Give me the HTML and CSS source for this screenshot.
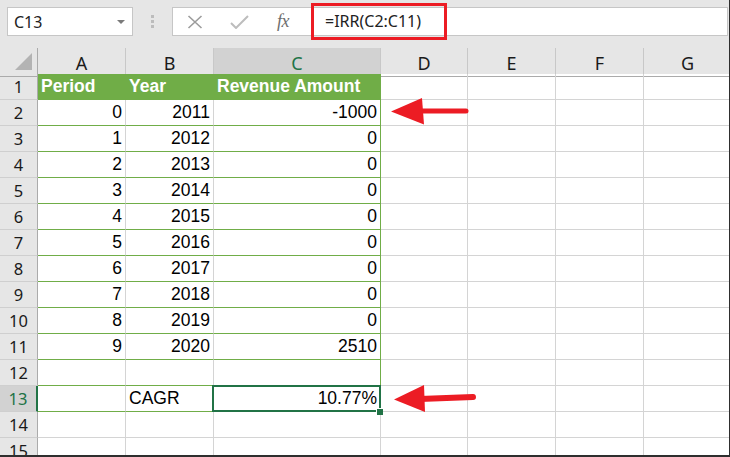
FILE: index.html
```html
<!DOCTYPE html>
<html>
<head>
<meta charset="utf-8">
<link rel="stylesheet" href="styles.css">
</head>
<body>
<div class="page">
  <div class="toolbar">
    <div class="namebox"><span class="name">C13</span><span class="dd"></span></div>
    <div class="grip"><i></i><i></i><i></i></div>
    <div class="fbar">
      <div class="fbtn">
        <svg width="16" height="14" viewBox="0 0 16 14"><path d="M1.5 1 L14.5 13 M14.5 1 L1.5 13" stroke="#9c9c9c" stroke-width="1.6" fill="none"/></svg>
      </div>
      <div class="fbtn">
        <svg width="19" height="14" viewBox="0 0 19 14"><path d="M1 8 L6 13 L18 1" stroke="#bdbdbd" stroke-width="2" fill="none"/></svg>
      </div>
      <div class="fbtn fx">fx</div>
      <div class="formula">=IRR(C2:C11)</div>
    </div>
  </div>

  <div class="sheet">
    <div class="row hdr">
      <div class="corner"><svg width="38" height="26" viewBox="0 0 38 26"><polygon points="16,23 33,6 33,23" fill="#b3b3b3"/></svg></div>
      <div class="ch">A</div><div class="ch">B</div><div class="ch sel">C</div><div class="ch">D</div><div class="ch">E</div><div class="ch">F</div><div class="ch">G</div>
    </div>

    <div class="row">
      <div class="rh">1</div>
      <div class="cell th">Period</div><div class="cell th">Year</div><div class="cell th">Revenue Amount</div>
      <div class="cell"></div><div class="cell"></div><div class="cell"></div><div class="cell"></div>
    </div>
    <div class="row">
      <div class="rh">2</div>
      <div class="cell num t">0</div><div class="cell num t">2011</div><div class="cell num t tr">-1000</div>
      <div class="cell"></div><div class="cell"></div><div class="cell"></div><div class="cell"></div>
    </div>
    <div class="row">
      <div class="rh">3</div>
      <div class="cell num t">1</div><div class="cell num t">2012</div><div class="cell num t tr">0</div>
      <div class="cell"></div><div class="cell"></div><div class="cell"></div><div class="cell"></div>
    </div>
    <div class="row">
      <div class="rh">4</div>
      <div class="cell num t">2</div><div class="cell num t">2013</div><div class="cell num t tr">0</div>
      <div class="cell"></div><div class="cell"></div><div class="cell"></div><div class="cell"></div>
    </div>
    <div class="row">
      <div class="rh">5</div>
      <div class="cell num t">3</div><div class="cell num t">2014</div><div class="cell num t tr">0</div>
      <div class="cell"></div><div class="cell"></div><div class="cell"></div><div class="cell"></div>
    </div>
    <div class="row">
      <div class="rh">6</div>
      <div class="cell num t">4</div><div class="cell num t">2015</div><div class="cell num t tr">0</div>
      <div class="cell"></div><div class="cell"></div><div class="cell"></div><div class="cell"></div>
    </div>
    <div class="row">
      <div class="rh">7</div>
      <div class="cell num t">5</div><div class="cell num t">2016</div><div class="cell num t tr">0</div>
      <div class="cell"></div><div class="cell"></div><div class="cell"></div><div class="cell"></div>
    </div>
    <div class="row">
      <div class="rh">8</div>
      <div class="cell num t">6</div><div class="cell num t">2017</div><div class="cell num t tr">0</div>
      <div class="cell"></div><div class="cell"></div><div class="cell"></div><div class="cell"></div>
    </div>
    <div class="row">
      <div class="rh">9</div>
      <div class="cell num t">7</div><div class="cell num t">2018</div><div class="cell num t tr">0</div>
      <div class="cell"></div><div class="cell"></div><div class="cell"></div><div class="cell"></div>
    </div>
    <div class="row">
      <div class="rh">10</div>
      <div class="cell num t">8</div><div class="cell num t">2019</div><div class="cell num t tr">0</div>
      <div class="cell"></div><div class="cell"></div><div class="cell"></div><div class="cell"></div>
    </div>
    <div class="row">
      <div class="rh">11</div>
      <div class="cell num t">9</div><div class="cell num t">2020</div><div class="cell num t tr">2510</div>
      <div class="cell"></div><div class="cell"></div><div class="cell"></div><div class="cell"></div>
    </div>
    <div class="row">
      <div class="rh">12</div>
      <div class="cell t"></div><div class="cell t"></div><div class="cell tr"></div>
      <div class="cell"></div><div class="cell"></div><div class="cell"></div><div class="cell"></div>
    </div>
    <div class="row">
      <div class="rh rsel">13</div>
      <div class="cell t"></div><div class="cell t">CAGR</div><div class="cell num t tr active">10.77%<span class="handle"></span></div>
      <div class="cell"></div><div class="cell"></div><div class="cell"></div><div class="cell"></div>
    </div>
    <div class="row">
      <div class="rh">14</div>
      <div class="cell"></div><div class="cell"></div><div class="cell"></div>
      <div class="cell"></div><div class="cell"></div><div class="cell"></div><div class="cell"></div>
    </div>
    <div class="row">
      <div class="rh">15</div>
      <div class="cell"></div><div class="cell"></div><div class="cell"></div>
      <div class="cell"></div><div class="cell"></div><div class="cell"></div><div class="cell"></div>
    </div>
  </div>

  <div class="redbox"></div>
  <svg class="arrows" width="730" height="457" viewBox="0 0 730 457">
    <line x1="418" y1="111" x2="466" y2="111" stroke="#ec1c24" stroke-width="5" stroke-linecap="round"/>
    <polygon points="391,111.5 422,98 424,124.5" fill="#ec1c24"/>
    <line x1="420" y1="399" x2="473" y2="397" stroke="#ec1c24" stroke-width="6" stroke-linecap="round"/>
    <polygon points="394,399.5 424,385 425,412" fill="#ec1c24"/>
  </svg>
</div>
</body>
</html>
```

FILE: styles.css
```css
html, body {
  margin: 0;
  padding: 0;
  background: #ffffff;
}

.page {
  position: relative;
  width: 730px;
  height: 457px;
  box-sizing: border-box;
  border-right: 1px solid #2e2e2e;
  border-bottom: 2px solid #2e2e2e;
  overflow: hidden;
  background: #ffffff;
}

/* ---------- toolbar ---------- */
.toolbar {
  height: 48px;
  box-sizing: border-box;
  background: #e6e6e6;
  display: flex;
  align-items: flex-start;
  padding: 7px 1px 0 7px;
}

.namebox {
  width: 126px;
  height: 29px;
  box-sizing: border-box;
  background: #ffffff;
  border: 1px solid #c6c6c6;
  display: flex;
  align-items: center;
  padding: 0 7px 0 6px;
  font-family: "Noto Sans", sans-serif;
  font-size: 16px;
  color: #222222;
}

.namebox .name {
  flex: 1;
  line-height: 1;
}

.dd {
  width: 0;
  height: 0;
  border-left: 4px solid transparent;
  border-right: 4px solid transparent;
  border-top: 4px solid #7a7a7a;
  margin-top: 1px;
}

.grip {
  width: 39px;
  height: 29px;
  display: flex;
  flex-direction: column;
  align-items: center;
  justify-content: center;
  gap: 2px;
}

.grip i {
  display: block;
  width: 3px;
  height: 3px;
  background: #bcbcbc;
}

.fbar {
  flex: 1;
  height: 29px;
  box-sizing: border-box;
  background: #ffffff;
  border: 1px solid #c6c6c6;
  display: flex;
  align-items: center;
}

.fbtn {
  width: 44px;
  height: 27px;
  display: flex;
  align-items: center;
  justify-content: center;
}

.fbtn svg {
  display: block;
}

.fx {
  font-family: "Liberation Serif", serif;
  font-style: italic;
  font-size: 18px;
  color: #6e6e6e;
  letter-spacing: -0.5px;
}

.formula {
  padding-left: 20px;
  font-family: "Noto Sans", sans-serif;
  font-size: 16px;
  color: #222222;
  white-space: nowrap;
  line-height: 1;
  margin-top: -1px;
}

/* ---------- sheet ---------- */
.sheet {
  width: 732px;
}

.row {
  display: grid;
  grid-template-columns: 38px 88px 88px 167px 87px 88px 88px 88px;
  height: 26px;
}

.hdr {
  background: #e6e6e6;
}

.corner {
  box-sizing: border-box;
  border-right: 1px solid #ababab;
  border-bottom: 1px solid #ababab;
  position: relative;
}

.corner svg {
  display: block;
  position: absolute;
  top: -1px;
  left: -1px;
}

.ch {
  box-sizing: border-box;
  border-right: 1px solid #c8c8c8;
  border-bottom: 1px solid #ababab;
  display: flex;
  align-items: center;
  justify-content: center;
  padding-top: 2px;
  font-family: "Noto Sans", sans-serif;
  font-size: 18px;
  color: #1a1a1a;
}

.ch.sel {
  background: #d2d2d2;
  color: #217346;
  border-bottom: 2px solid #217346;
  padding-top: 3px;
}

.rh {
  box-sizing: border-box;
  background: #e6e6e6;
  border-right: 1px solid #ababab;
  border-bottom: 1px solid #cfcfcf;
  display: flex;
  align-items: center;
  justify-content: center;
  font-family: "Noto Sans", sans-serif;
  font-size: 16.5px;
  color: #1a1a1a;
}

.rh.rsel {
  background: #d2d2d2;
  color: #217346;
  border-right: 2px solid #217346;
}

.cell {
  position: relative;
  box-sizing: border-box;
  border-right: 1px solid #d4d4d4;
  border-bottom: 1px solid #d4d4d4;
  display: flex;
  align-items: center;
  padding: 0 3px;
  font-family: "Liberation Sans", sans-serif;
  font-size: 17.5px;
  color: #000000;
  white-space: nowrap;
  overflow: visible;
}

.num {
  justify-content: flex-end;
}

.t {
  border-bottom-color: #70ad47;
}

.tr {
  border-right-color: #70ad47;
}

.th {
  background: #70ad47;
  color: #ffffff;
  font-weight: bold;
  border-right-color: #70ad47;
  border-bottom-color: #70ad47;
}

.active::after {
  content: "";
  position: absolute;
  top: -1px;
  left: -2px;
  right: -1px;
  bottom: -1px;
  border: 2px solid #217346;
  pointer-events: none;
}

.handle {
  position: absolute;
  right: -3px;
  bottom: -4px;
  width: 6px;
  height: 6px;
  background: #217346;
  border-left: 1px solid #ffffff;
  border-top: 1px solid #ffffff;
  z-index: 2;
}

/* ---------- annotations ---------- */
.redbox {
  position: absolute;
  left: 311px;
  top: 3px;
  width: 136px;
  height: 37px;
  box-sizing: border-box;
  border: 3px solid #ec1c24;
}

.arrows {
  position: absolute;
  left: 0;
  top: 0;
  pointer-events: none;
}
```
